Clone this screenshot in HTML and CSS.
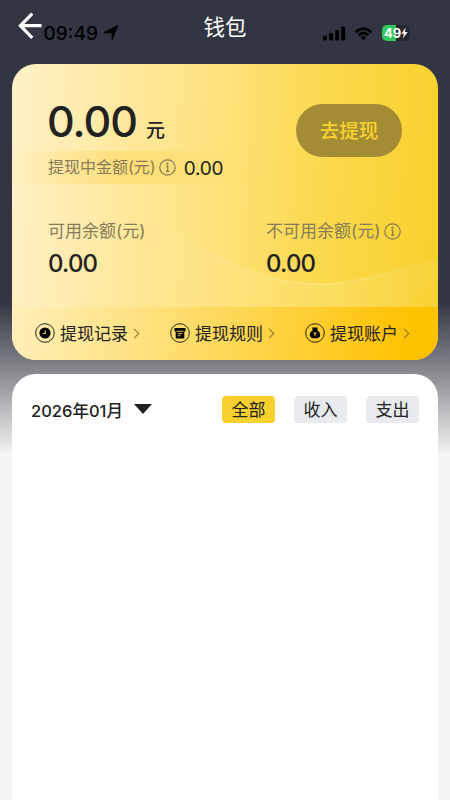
FILE: index.html
```html
<!DOCTYPE html>
<html lang="zh-CN">
<head>
<meta charset="utf-8">
<meta name="viewport" content="width=device-width, initial-scale=1">
<title>钱包</title>
<link rel="stylesheet" href="styles.css">
</head>
<body>
<div class="page">
  <header class="nav">
    <svg class="back" width="24" height="28" viewBox="0 0 24 28" fill="none" stroke="#fff" stroke-width="3.2"><path d="M14.3 1.6 2.4 13.7l11.9 12.1M2.4 13.7H23.500"/></svg>
    <h1 class="title">钱包</h1>
    <div class="status">
      <span class="clock">09:49</span>
      <svg class="locate" width="16" height="16" viewBox="0 0 16 16"><path d="M15.300.6 9.800 14.600q-.8 1.400-1.200-.2V8.300H1.600Q-.2 7.900 1.400 6.800L13.900.4q1.300-.6 1.400.2z"/></svg>
      <svg class="signal" width="23" height="15" viewBox="0 0 23 15"><rect x="0" y="9.500" width="4" height="5" rx="1.300"/><rect x="6.100" y="7" width="4" height="7.500" rx="1.300"/><rect x="12.200" y="4" width="4" height="10.500" rx="1.300"/><rect x="18.200" y=".5" width="4" height="14" rx="1.300"/></svg>
      <svg class="wifi" width="19" height="15" viewBox="0 0 20 15"><path d="M.8 5.100Q10-3.500 19.200 5.100L17.300 7.200Q10 .6 2.700 7.200zM3.900 8.300Q10 2.700 16.100 8.300L14.200 10.400Q10 6.700 5.800 10.400zM7 11.400Q10 8.900 13 11.400L10 14.500z"/></svg>
      <span class="battery"><span class="level">49</span><svg width="7" height="12" viewBox="0 0 7 12"><path d="M4.800.6.300 6.700h2.600L1.900 11.400 6.700 5H3.900z" fill="#fff"/></svg></span>
    </div>
  </header>

  <main class="content">
    <section class="wallet">
      <svg class="wave" width="426" height="243" viewBox="0 0 426 243" fill="none">
        <defs>
          <linearGradient id="waveFill" x1="120" x2="426" y1="0" y2="0" gradientUnits="userSpaceOnUse"><stop stop-color="#fff" stop-opacity="0"/><stop offset=".65" stop-color="#fff" stop-opacity=".12"/><stop offset="1" stop-color="#fff" stop-opacity=".06"/></linearGradient>
          <linearGradient id="waveLine" x1="130" x2="426" y1="0" y2="0" gradientUnits="userSpaceOnUse"><stop stop-color="#fff" stop-opacity="0"/><stop offset=".6" stop-color="#fff" stop-opacity=".2"/><stop offset="1" stop-color="#fff" stop-opacity="0"/></linearGradient>
        </defs>
        <path d="M130 151C190 178 235 224 318 220 362 216 390 201 426 196V243H130z" fill="url(#waveFill)"/>
        <path d="M426 216Q404 227 394 243H426z" fill="#f9d02b" opacity=".35"/>
        <path d="M130 151C190 178 235 224 318 220 362 216 390 201 426 196" stroke="url(#waveLine)" stroke-width="2"/>
      </svg>
      <div class="summary">
        <div class="total">
          <p class="amount">0.00<span class="unit">元</span></p>
          <p class="pending"><span class="label">提现中金额(元)</span><svg class="info" width="17" height="17" viewBox="0 0 17 17"><circle cx="8.500" cy="8.500" r="7.700"/><path d="M7.200 7.200h1.500V12.300M7 12.400h3.200"/><circle class="dot" cx="8.500" cy="4.700" r="1.100"/></svg><span class="sum">0.00</span></p>
        </div>
        <button class="withdraw">去提现</button>
      </div>
      <div class="balances">
        <div class="balance">
          <p class="label">可用余额(元)</p>
          <p class="value">0.00</p>
        </div>
        <div class="balance locked">
          <p class="label">不可用余额(元)<svg class="info" width="17" height="17" viewBox="0 0 17 17"><circle cx="8.500" cy="8.500" r="7.700"/><path d="M7.200 7.200h1.500V12.300M7 12.400h3.200"/><circle class="dot" cx="8.500" cy="4.700" r="1.100"/></svg></p>
          <p class="value">0.00</p>
        </div>
      </div>
      <nav class="links">
        <a class="link"><svg width="20" height="20" viewBox="0 0 20 20"><circle class="ring" cx="10" cy="10" r="9.300"/><circle cx="10" cy="10" r="5.600"/><path class="cut" d="M10.300 7.500v3H7.700"/></svg><span>提现记录</span><i class="chevron"></i></a>
        <a class="link"><svg width="20" height="20" viewBox="0 0 20 20"><circle class="ring" cx="10" cy="10" r="9.300"/><path d="M4.500 5h11v3.500h-1.200V15.500H5.700V8.500H4.500z"/><path class="cut" d="M6.500 8.200h7M7.700 10.700h4.600M7.700 12.800h2.600"/></svg><span>提现规则</span><i class="chevron"></i></a>
        <a class="link"><svg width="20" height="20" viewBox="0 0 20 20"><circle class="ring" cx="10" cy="10" r="9.300"/><path d="M7.200 4.600h5.600L12.300 7.300c1.800 1 2.900 2.900 2.900 4.900 0 2-1.500 3.100-5.200 3.100s-5.200-1.100-5.200-3.100c0-2 1.100-3.900 2.900-4.900z"/><path class="cut" d="m8.600 9.500 1.400 1.300 1.400-1.300M10 10.800v2.200"/></svg><span>提现账户</span><i class="chevron"></i></a>
      </nav>
    </section>

    <section class="records">
      <div class="filters">
        <button class="month">2026年01月<i class="caret"></i></button>
        <div class="tabs">
          <button class="tab active">全部</button>
          <button class="tab">收入</button>
          <button class="tab">支出</button>
        </div>
      </div>
    </section>
  </main>
</div>
</body>
</html>
```
FILE: styles.css
```css
* {
  box-sizing: border-box;
}

body,
h1,
p {
  margin: 0;
}

body {
  font-family: Inter, "Noto Sans CJK SC", sans-serif;
  color: #222;
  background: #f4f6f5;
}

button {
  border: 0;
  padding: 0;
  font: inherit;
  color: inherit;
  background: none;
}

svg {
  display: block;
  flex: none;
}

.page {
  height: 800px;
  display: flex;
  flex-direction: column;
  overflow: hidden;
  background: linear-gradient(#323642 0, #323642 302px, #808187 365px, #f4f6f5 455px);
}

.nav {
  position: relative;
  flex: none;
  height: 64px;
  display: flex;
  align-items: flex-start;
  justify-content: center;
}

.back {
  position: absolute;
  left: 18px;
  top: 12px;
}

.title {
  padding-top: 12px;
  font-size: 21.500px;
  line-height: 30px;
  font-weight: 400;
  color: #fff;
}

.status {
  position: absolute;
  left: 43.500px;
  right: 40px;
  top: 24px;
  height: 18px;
  display: flex;
  align-items: center;
}

.clock {
  width: 56px;
  padding-top: 2px;
  font-size: 19px;
  font-weight: 500;
  line-height: 18px;
  color: #000;
}

.locate {
  margin-left: 3px;
}

.signal {
  margin-left: auto;
}

.wifi {
  margin-left: 8px;
}

.battery {
  width: 28px;
  height: 16px;
  margin-left: 9px;
  padding-left: 2px;
  display: flex;
  align-items: center;
  border-radius: 5px;
  background: linear-gradient(90deg, #34c759 14px, #24272e 14px);
}

.level {
  font-size: 13px;
  line-height: 16px;
  font-weight: 700;
  color: #fff;
}

.content {
  flex: 1;
  padding: 0 12px;
  display: flex;
  flex-direction: column;
  gap: 14px;
}

.wallet {
  position: relative;
  height: 296px;
  display: flex;
  flex-direction: column;
  overflow: hidden;
  border-radius: 24px;
  background: linear-gradient(93deg, #fff1c8 0%, #ffe178 50%, #fbd94d 72%, #f9d02b 100%);
}

.wave {
  position: absolute;
  left: 0;
  top: 0;
}

.summary,
.balances,
.links {
  position: relative;
}

.summary {
  display: flex;
  justify-content: space-between;
  padding-right: 36px;
}

.total {
  padding-top: 31px;
}

.amount {
  height: 56px;
  padding-left: 35px;
  font-size: 43px;
  line-height: 53px;
  font-weight: 500;
  letter-spacing: -1px;
}

.unit {
  margin-left: 9px;
  font-size: 19px;
  letter-spacing: 0;
}

.pending {
  width: 242px;
  height: 33px;
  padding-left: 36px;
  display: flex;
  align-items: center;
  background: linear-gradient(90deg, rgba(255, 211, 82, 0), rgba(255, 211, 82, .5) 50%, rgba(255, 211, 82, 0));
}

.label {
  color: #857b58;
  font-size: 16px;
}

.pending .label {
  line-height: 22px;
  margin-top: -1px;
}

.info {
  fill: none;
  stroke: #857b58;
  stroke-width: 1.2;
}

.dot {
  fill: #857b58;
  stroke: none;
}

.pending .info {
  margin-left: 3px;
}

.sum {
  margin-left: 8px;
  padding-top: 1px;
  font-size: 19px;
  letter-spacing: -.2px;
}

.withdraw {
  width: 106px;
  height: 53px;
  margin-top: 40px;
  padding-bottom: 2px;
  border-radius: 27px;
  background: #a48c34;
  color: #f9d32f;
  font-size: 19.500px;
  font-weight: 500;
}

.balances {
  display: flex;
  padding: 35px 0 0 36px;
}

.balance {
  width: 218px;
}

.balance .label {
  display: flex;
  align-items: center;
  height: 24px;
  line-height: 24px;
  font-size: 17px;
}

.locked .info {
  margin-left: 4px;
}

.locked {
  width: 160px;
}

.value {
  margin-top: 6px;
  font-size: 24px;
  line-height: 30px;
  font-weight: 500;
  letter-spacing: -.8px;
}

.links {
  height: 53px;
  margin-top: auto;
  padding: 0 24px 1px 23px;
  display: flex;
  align-items: center;
  gap: 29px;
  background: linear-gradient(97deg, #ffefba 0%, #ffd95e 48%, #ffc200 93%);
}

.link {
  width: 106px;
  display: flex;
  align-items: center;
  font-size: 17px;
  line-height: 24px;
}

.link span {
  flex: none;
  margin-left: 5px;
  padding-top: 1px;
}

.ring {
  fill: none;
  stroke: #222;
}

.cut {
  fill: none;
  stroke: #eec65e;
  stroke-width: 1.1;
}

.chevron {
  flex: none;
  width: 7px;
  height: 7px;
  margin-left: 3px;
  border: solid #8a7434;
  border-width: 1.5px 1.5px 0 0;
  transform: rotate(45deg);
}

.records {
  flex: 1;
  border-radius: 24px 24px 0 0;
  background: #fff;
}

.filters {
  display: flex;
  justify-content: space-between;
  padding: 22px 19px 0;
}

.month {
  display: flex;
  align-items: center;
  height: 27px;
  font-size: 16.500px;
  font-weight: 500;
}

.caret {
  margin-left: 11px;
  margin-top: -2px;
  border: solid transparent;
  border-width: 10px 9.500px 0;
  border-top-color: #222;
}

.tabs {
  display: flex;
  gap: 19px;
}

.tab {
  width: 53px;
  height: 27px;
  padding-top: 1px;
  border-radius: 4px;
  background: #e9eaee;
  font-size: 17px;
  line-height: 26px;
}

.active {
  background: #f9d12f;
}
```
